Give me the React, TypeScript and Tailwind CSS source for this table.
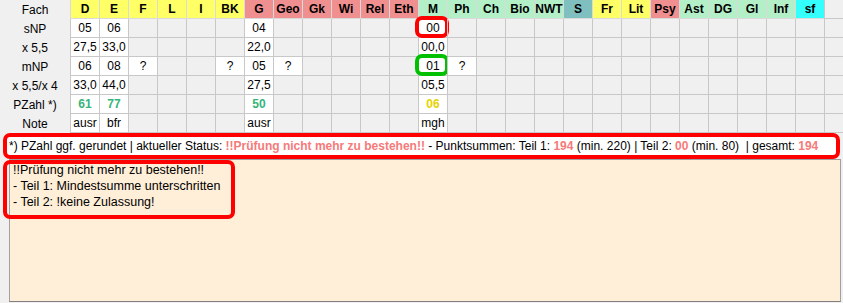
import clsx from "clsx";

type Tone = "y" | "s" | "m" | "t" | "c";

const HEAD_BG: Record<Tone, string> = {
  y: "bg-[#ffff66]",
  s: "bg-[#f08f8f]",
  m: "bg-[#b3f0c8]",
  t: "bg-[#7fbfbf]",
  c: "bg-[#33ffff]",
};

const COLS: [string, Tone][] = [
  ["D", "y"], ["E", "y"], ["F", "y"], ["L", "y"], ["I", "y"], ["BK", "y"],
  ["G", "s"], ["Geo", "s"], ["Gk", "s"], ["Wi", "s"], ["Rel", "s"], ["Eth", "s"],
  ["M", "m"], ["Ph", "m"], ["Ch", "m"], ["Bio", "m"], ["NWT", "m"],
  ["S", "t"], ["Fr", "y"], ["Lit", "y"], ["Psy", "s"],
  ["Ast", "m"], ["DG", "m"], ["Gl", "m"], ["Inf", "m"], ["sf", "c"],
];

const ROWS = ["sNP", "x 5,5", "mNP", "x 5,5/x 4", "PZahl *)", "Note"];

const _ = null;
const DATA: Record<string, (string | null)[]> = {
  D: ["05", "27,5", "06", "33,0", "61", "ausr"],
  E: ["06", "33,0", "08", "44,0", "77", "bfr"],
  F: [_, _, "?", _, _, _],
  BK: [_, _, "?", _, _, _],
  G: ["04", "22,0", "05", "27,5", "50", "ausr"],
  Geo: [_, _, "?", _, _, _],
  M: ["00", "00,0", "01", "05,5", "06", "mgh"],
  Ph: [_, _, "?", _, _, _],
};

// PZahl-Farbe je Fach
const PZAHL_COLOR: Record<string, string> = {
  D: "text-[#35b57a]",
  E: "text-[#35b57a]",
  G: "text-[#35b57a]",
  M: "text-[#e6d200]",
};

// Markierungen (rot = sNP, grün = mNP) in Spalte M
const MARKS: Record<string, Record<number, string>> = {
  M: { 0: "border-[#ff0000]", 2: "border-[#00c000]" },
};

const line = "border-[#c8c8c8]";

export default function App() {
  return (
    <div className="w-[843px] h-[303px] bg-[#f0f0f0] overflow-hidden flex flex-col text-black font-['Liberation_Sans',Arial,sans-serif] text-[12px]">
      <div>
        <div className="flex h-[19px]">
          <div className="w-[70px] flex items-center justify-center">Fach</div>
          {COLS.map(([name, tone]) => (
            <div
              key={name}
              className={clsx(
                "w-[29px] border-l border-b border-[#dadada] flex items-center justify-center font-bold whitespace-nowrap overflow-hidden",
                HEAD_BG[tone],
              )}
            >
              {name}
            </div>
          ))}
          <div className={clsx("flex-1 border-l border-b", line)} />
        </div>

        {ROWS.map((label, r) => (
          <div key={label} className="flex h-[19px]">
            <div className="w-[70px] flex items-center justify-center whitespace-nowrap">{label}</div>
            {COLS.map(([name]) => {
              const v = DATA[name]?.[r] ?? null;
              const mark = MARKS[name]?.[r];
              return (
                <div
                  key={name}
                  className={clsx(
                    "relative w-[29px] border-l border-b flex items-center justify-center whitespace-nowrap",
                    line,
                    v !== null && "bg-white",
                    r === 4 && v !== null && clsx("font-bold", PZAHL_COLOR[name]),
                  )}
                >
                  {v}
                  {mark && (
                    <div className={clsx("absolute left-[-4px] top-[-3px] w-[34px] h-[22px] border-4 rounded-[7px]", mark)} />
                  )}
                </div>
              );
            })}
            <div className={clsx("flex-1 border-l border-b", line)} />
          </div>
        ))}
      </div>

      <div className="mx-[3px] h-[26px] shrink-0 border-4 border-[#ff0000] rounded-[7px] bg-white flex items-center pl-[2px] whitespace-nowrap">
        <span>*) PZahl ggf. gerundet | aktueller Status:&nbsp;</span>
        <span className="font-bold text-[#f57a7a]">!!Prüfung nicht mehr zu bestehen!!</span>
        <span>&nbsp;- Punktsummen: Teil 1:&nbsp;</span>
        <span className="font-bold text-[#f57a7a]">194</span>
        <span>&nbsp;(min. 220) | Teil 2:&nbsp;</span>
        <span className="font-bold text-[#f57a7a]">00</span>
        <span>&nbsp;(min. 80) &nbsp;| gesamt:&nbsp;</span>
        <span className="font-bold text-[#f57a7a]">194</span>
      </div>

      <div className="relative flex-1 ml-[9px] mr-[2px] mb-px border border-[#a0a0a0] border-b-[#808080] bg-[#ffeed8] pl-[3px] pt-[2px] text-[12.5px] leading-[16px]">
        <div>!!Prüfung nicht mehr zu bestehen!!</div>
        <div>- Teil 1: Mindestsumme unterschritten</div>
        <div>- Teil 2: !keine Zulassung!</div>
        <div className="absolute left-[-7px] top-0 w-[232px] h-[59px] border-4 border-[#ff0000] rounded-[7px]" />
      </div>
    </div>
  );
}
